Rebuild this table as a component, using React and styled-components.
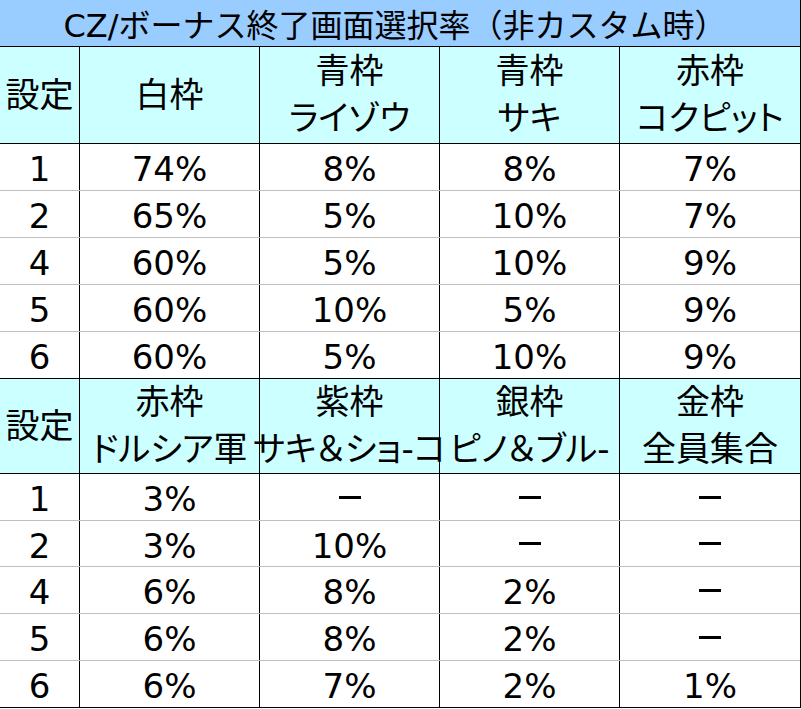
import React from "react";
import styled, { createGlobalStyle } from "styled-components";

const Global = createGlobalStyle`
  html, body { margin: 0; padding: 0; background: #ffffff; }
  body { font-family: "DejaVu Sans", "Noto Sans CJK JP", sans-serif; color: #000; }
`;

const Table = styled.div`
  width: 800px;
  display: flex;
  flex-direction: column;
  border-right: 1px solid #000;
`;

const Title = styled.div`
  height: 46px;
  background: #99ccff;
  border-bottom: 1px solid #000;
  display: flex;
  align-items: center;
  justify-content: center;
  font-size: 32px;
  padding-right: 10px;
`;

const Row = styled.div`
  display: grid;
  grid-template-columns: 80px 180px 180px 180px 1fr;
  height: ${(p) => p.$h}px;
  background: ${(p) => (p.$head ? "#ccffff" : "#ffffff")};
  border-bottom: 1px solid ${(p) => (p.$strong ? "#000" : "#bfbfbf")};
`;

const Cell = styled.div`
  display: flex;
  flex-direction: column;
  align-items: center;
  justify-content: center;
  border-right: 1px solid #000;
  font-size: 34px;
  font-feature-settings: ${(p) => (p.$head ? '"palt"' : "normal")};
  line-height: ${(p) => (p.$head ? "47px" : "1")};
  padding-top: ${(p) => (p.$head ? 0 : 4)}px;
  white-space: nowrap;
  &:last-child { border-right: none; }
`;

const Dash = styled.span`
  display: inline-block;
  width: 22px;
  height: 3px;
  background: #000;
  margin-top: -4px;
`;

const head1 = [["設定"], ["白枠"], ["青枠", "ライゾウ"], ["青枠", "サキ"], ["赤枠", "コクピット"]];
const rows1 = [
  ["1", "74%", "8%", "8%", "7%"],
  ["2", "65%", "5%", "10%", "7%"],
  ["4", "60%", "5%", "10%", "9%"],
  ["5", "60%", "10%", "5%", "9%"],
  ["6", "60%", "5%", "10%", "9%"],
];
const head2 = [["設定"], ["赤枠", "ドルシア軍"], ["紫枠", "サキ＆ショ-コ"], ["銀枠", "ピノ＆ブル-"], ["金枠", "全員集合"]];
const rows2 = [
  ["1", "3%", "-", "-", "-"],
  ["2", "3%", "10%", "-", "-"],
  ["4", "6%", "8%", "2%", "-"],
  ["5", "6%", "8%", "2%", "-"],
  ["6", "6%", "7%", "2%", "1%"],
];

function Header({ cells, h }) {
  return (
    <Row $head $strong $h={h}>
      {cells.map((lines, i) => (
        <Cell key={i} $head>
          {lines.map((l, j) => (
            <span key={j}>{l}</span>
          ))}
        </Cell>
      ))}
    </Row>
  );
}

function DataRows({ rows, heights }) {
  return rows.map((r, i) => (
    <Row key={i} $h={heights[i]} $strong={i === rows.length - 1}>
      {r.map((v, j) => (
        <Cell key={j}>{v === "-" ? <Dash aria-label="－" /> : v}</Cell>
      ))}
    </Row>
  ));
}

export default function App() {
  return (
    <>
      <Global />
      <Table>
        <Title>CZ/ボーナス終了画面選択率（非カスタム時）</Title>
        <Header cells={head1} h={96} />
        <DataRows rows={rows1} heights={[46, 46, 46, 46, 46]} />
        <Header cells={head2} h={94} />
        <DataRows rows={rows2} heights={[46, 45, 46, 46, 46]} />
      </Table>
    </>
  );
}
